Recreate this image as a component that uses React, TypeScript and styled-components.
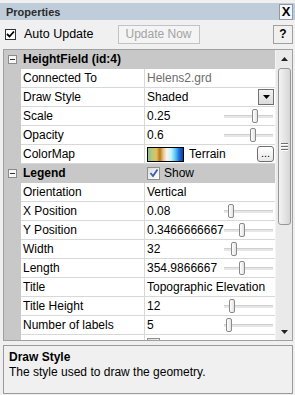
import React from "react";
import styled, { createGlobalStyle } from "styled-components";

const GlobalStyle = createGlobalStyle`
  html, body { margin: 0; padding: 0; background: #f0f0f0; }
  body { font-family: "Liberation Sans", Arial, sans-serif; font-size: 12px; color: #000; }
  * { box-sizing: border-box; }
`;

const Panel = styled.div`
  width: 295px;
  height: 395px;
  background: #f0f0f0;
  display: flex;
  flex-direction: column;
  overflow: hidden;
`;

const TitleBar = styled.div`
  margin-top: 3px;
  height: 17px;
  background: #bfcddb;
  display: flex;
  align-items: center;
  justify-content: space-between;
  padding-left: 6px;
  padding-right: 2px;
`;

const TitleText = styled.span`
  font-weight: bold;
  font-size: 11px;
  color: #2b2b2b;
`;

const CloseButton = styled.div`
  width: 14px;
  height: 16px;
  border: 1px solid #8d99a6;
  background: #f4f6f8;
  display: flex;
  align-items: center;
  justify-content: center;
  font-weight: bold;
  font-size: 13px;
  line-height: 1;
`;

const Toolbar = styled.div`
  height: 26px;
  display: flex;
  align-items: center;
  padding-left: 5px;
  padding-right: 2px;
  margin-top: 1px;
`;

const ClassicBox = styled.div`
  width: 11px;
  height: 11px;
  border: 1px solid #333;
  background: #fff;
  display: flex;
  align-items: center;
  justify-content: center;
`;

const ToolLabel = styled.span`
  margin-left: 8px;
  font-size: 12.5px;
`;

const ToolButton = styled.div<{ $disabled?: boolean; $w: number }>`
  height: 19px;
  width: ${(p) => p.$w}px;
  border: 1px solid ${(p) => (p.$disabled ? "#c2c2c2" : "#a0a0a0")};
  background: ${(p) => (p.$disabled ? "#f4f4f4" : "#f0f0f0")};
  color: ${(p) => (p.$disabled ? "#a3a3a3" : "#000")};
  font-weight: ${(p) => (p.$disabled ? "normal" : "bold")};
  display: flex;
  align-items: center;
  justify-content: center;
  font-size: 12px;
`;

const Spacer = styled.div<{ $w?: number }>`
  ${(p) => (p.$w ? `width: ${p.$w}px; flex-shrink: 0;` : "flex: 1;")}
`;

const Grid = styled.div`
  margin: 2px 2px 0 3px;
  height: 292px;
  border: 1px solid #a0a0a0;
  display: flex;
  background: #fff;
`;

const Rows = styled.div`
  flex: 1;
  overflow: hidden;
`;

const Row = styled.div<{ $header?: boolean }>`
  display: grid;
  grid-template-columns: 17px 124px 1fr;
  height: 19px;
  background: ${(p) => (p.$header ? "#c8c8c8" : "#fff")};
`;

const Gutter = styled.div`
  background: #c8c8c8;
  display: flex;
  align-items: center;
  justify-content: center;
`;

const NameCell = styled.div<{ $header?: boolean }>`
  border-bottom: 1px solid ${(p) => (p.$header ? "#c8c8c8" : "#d8d8d8")};
  border-right: 1px solid ${(p) => (p.$header ? "#c8c8c8" : "#d8d8d8")};
  padding-left: 2px;
  line-height: 18px;
  font-weight: ${(p) => (p.$header ? "bold" : "normal")};
  white-space: nowrap;
  overflow: hidden;
`;

const ValueCell = styled.div<{ $header?: boolean; $muted?: boolean }>`
  border-bottom: 1px solid ${(p) => (p.$header ? "#c8c8c8" : "#d8d8d8")};
  padding-left: 2px;
  padding-right: 1px;
  height: 19px;
  display: flex;
  align-items: center;
  white-space: nowrap;
  overflow: hidden;
  color: ${(p) => (p.$muted ? "#6d6d6d" : "#000")};
`;

const ValueText = styled.span`
  flex: 1;
  line-height: 18px;
`;

const MinusBox = styled.div`
  width: 9px;
  height: 9px;
  border: 1px solid #8a8a8a;
  background: #f6f6f6;
  display: flex;
  align-items: center;
  justify-content: center;
  &::after {
    content: "";
    width: 5px;
    height: 1px;
    background: #333;
  }
`;

const DropButton = styled.div`
  width: 16px;
  height: 16px;
  border: 1px solid #707070;
  background: linear-gradient(#f2f2f2, #dcdcdc);
  display: flex;
  align-items: center;
  justify-content: center;
`;

const SliderBox = styled.div`
  position: relative;
  width: 49px;
  height: 18px;
  margin-right: 1px;
  flex-shrink: 0;
`;

const SliderTrack = styled.div`
  position: absolute;
  left: 0;
  right: 0;
  top: 8px;
  height: 3px;
  background: #e6e6e6;
  border-top: 1px solid #cfcfcf;
`;

const SliderThumb = styled.div`
  position: absolute;
  top: 2px;
  width: 6px;
  height: 14px;
  border: 1px solid #8a8a8a;
  border-radius: 2px;
  background: linear-gradient(90deg, #ffffff, #e3e3e3);
`;

const Gradient = styled.div`
  width: 37px;
  height: 15px;
  border: 1px solid #000;
  background: linear-gradient(
    90deg,
    #8cc08a 0%,
    #b8c880 12%,
    #e0c060 24%,
    #b87818 34%,
    #e8c890 44%,
    #fbf6ee 54%,
    #c8f2fa 66%,
    #58c8f0 78%,
    #1a6ad8 90%,
    #0a3ca8 100%
  );
  flex-shrink: 0;
`;

const GradientLabel = styled.span`
  margin-left: 5px;
  flex: 1;
`;

const EllipsisButton = styled.div`
  width: 17px;
  height: 16px;
  border: 1px solid #707070;
  border-radius: 3px;
  background: linear-gradient(#ffffff, #e8e8e8);
  display: flex;
  align-items: flex-end;
  justify-content: center;
  font-size: 11px;
  line-height: 11px;
  padding-bottom: 2px;
`;

const Win7Box = styled.div`
  width: 13px;
  height: 13px;
  border: 1px solid #8e8f8f;
  background: linear-gradient(135deg, #dcdcdc, #ffffff);
  display: flex;
  align-items: center;
  justify-content: center;
  flex-shrink: 0;
`;

const ShowLabel = styled.span`
  margin-left: 4px;
`;

const Scrollbar = styled.div`
  width: 17px;
  display: flex;
  flex-direction: column;
  background: #eaeaea;
  border-left: 1px solid #f4f4f4;
`;

const ScrollArrow = styled.div`
  height: 17px;
  display: flex;
  align-items: center;
  justify-content: center;
`;

const ScrollTrack = styled.div`
  flex: 1;
  padding: 1px 1px 0 2px;
`;

const ScrollThumb = styled.div`
  height: 157px;
  border: 1px solid #979797;
  border-radius: 3px;
  background: linear-gradient(90deg, #f3f3f3, #e2e2e2 60%, #d6d6d6);
  display: flex;
  flex-direction: column;
  align-items: center;
  justify-content: center;
  gap: 2px;
`;

const Grip = styled.div`
  width: 7px;
  height: 1px;
  background: #6f6f6f;
  box-shadow: 0 1px 0 #fff;
`;

const Description = styled.div`
  margin: 4px 2px 0 3px;
  height: 49px;
  border: 1px solid #9a9a9a;
  padding: 4px 5px;
  background: #f0f0f0;
`;

const DescTitle = styled.div`
  font-weight: bold;
  line-height: 15px;
`;

const DescText = styled.div`
  line-height: 15px;
`;

const ClassicCheck = () => (
  <svg width="9" height="9" viewBox="0 0 9 9">
    <path d="M1 4 L3.5 6.5 L8 1.5" stroke="#000" strokeWidth="1.8" fill="none" />
  </svg>
);

const BlueCheck = () => (
  <svg width="10" height="10" viewBox="0 0 10 10">
    <path d="M1.5 5 L4 8 L8.5 1.5" stroke="#3b5ea8" strokeWidth="1.8" fill="none" />
  </svg>
);

const Slider = ({ pos }: { pos: number }) => (
  <SliderBox>
    <SliderTrack />
    <SliderThumb style={{ left: `${pos}px` }} />
  </SliderBox>
);

type Item =
  | { kind: "header"; name: string; show?: boolean }
  | { kind: "text"; name: string; value: string; muted?: boolean }
  | { kind: "drop"; name: string; value: string }
  | { kind: "slider"; name: string; value: string; pos: number }
  | { kind: "color"; name: string; value: string }
  | { kind: "check"; name: string };

const items: Item[] = [
  { kind: "header", name: "HeightField (id:4)" },
  { kind: "text", name: "Connected To", value: "Helens2.grd", muted: true },
  { kind: "drop", name: "Draw Style", value: "Shaded" },
  { kind: "slider", name: "Scale", value: "0.25", pos: 28 },
  { kind: "slider", name: "Opacity", value: "0.6", pos: 26 },
  { kind: "color", name: "ColorMap", value: "Terrain" },
  { kind: "header", name: "Legend", show: true },
  { kind: "text", name: "Orientation", value: "Vertical" },
  { kind: "slider", name: "X Position", value: "0.08", pos: 4 },
  { kind: "slider", name: "Y Position", value: "0.3466666667", pos: 15 },
  { kind: "slider", name: "Width", value: "32", pos: 7 },
  { kind: "slider", name: "Length", value: "354.9866667", pos: 15 },
  { kind: "text", name: "Title", value: "Topographic Elevation" },
  { kind: "slider", name: "Title Height", value: "12", pos: 5 },
  { kind: "slider", name: "Number of labels", value: "5", pos: 2 },
  { kind: "check", name: "" },
];

const PropRow = ({ item }: { item: Item }) => {
  if (item.kind === "header") {
    return (
      <Row $header>
        <Gutter>
          <MinusBox />
        </Gutter>
        <NameCell $header>{item.name}</NameCell>
        <ValueCell $header>
          {item.show && (
            <>
              <Win7Box>
                <BlueCheck />
              </Win7Box>
              <ShowLabel>Show</ShowLabel>
            </>
          )}
        </ValueCell>
      </Row>
    );
  }
  let value: React.ReactNode = null;
  switch (item.kind) {
    case "text":
      value = (
        <ValueCell $muted={item.muted}>
          <ValueText>{item.value}</ValueText>
        </ValueCell>
      );
      break;
    case "drop":
      value = (
        <ValueCell>
          <ValueText>{item.value}</ValueText>
          <DropButton>
            <svg width="7" height="4" viewBox="0 0 7 4">
              <path d="M0 0 H7 L3.5 4 Z" fill="#000" />
            </svg>
          </DropButton>
        </ValueCell>
      );
      break;
    case "slider":
      value = (
        <ValueCell>
          <ValueText>{item.value}</ValueText>
          <Slider pos={item.pos} />
        </ValueCell>
      );
      break;
    case "color":
      value = (
        <ValueCell>
          <Gradient />
          <GradientLabel>{item.value}</GradientLabel>
          <EllipsisButton>...</EllipsisButton>
        </ValueCell>
      );
      break;
    case "check":
      value = (
        <ValueCell>
          <Win7Box />
        </ValueCell>
      );
      break;
  }
  return (
    <Row>
      <Gutter />
      <NameCell>{item.name}</NameCell>
      {value}
    </Row>
  );
};

export default function App() {
  return (
    <>
      <GlobalStyle />
      <Panel>
        <TitleBar>
          <TitleText>Properties</TitleText>
          <CloseButton>X</CloseButton>
        </TitleBar>
        <Toolbar>
          <ClassicBox>
            <ClassicCheck />
          </ClassicBox>
          <ToolLabel>Auto Update</ToolLabel>
          <Spacer $w={24} />
          <ToolButton $disabled $w={82}>
            Update Now
          </ToolButton>
          <Spacer />
          <ToolButton $w={20}>?</ToolButton>
        </Toolbar>
        <Grid>
          <Rows>
            {items.map((it, i) => (
              <PropRow key={i} item={it} />
            ))}
          </Rows>
          <Scrollbar>
            <ScrollArrow>
              <svg width="7" height="4" viewBox="0 0 7 4">
                <path d="M0 4 H7 L3.5 0 Z" fill="#222" />
              </svg>
            </ScrollArrow>
            <ScrollTrack>
              <ScrollThumb>
                <Grip />
                <Grip />
                <Grip />
              </ScrollThumb>
            </ScrollTrack>
            <ScrollArrow>
              <svg width="7" height="4" viewBox="0 0 7 4">
                <path d="M0 0 H7 L3.5 4 Z" fill="#222" />
              </svg>
            </ScrollArrow>
          </Scrollbar>
        </Grid>
        <Description>
          <DescTitle>Draw Style</DescTitle>
          <DescText>The style used to draw the geometry.</DescText>
        </Description>
      </Panel>
    </>
  );
}
